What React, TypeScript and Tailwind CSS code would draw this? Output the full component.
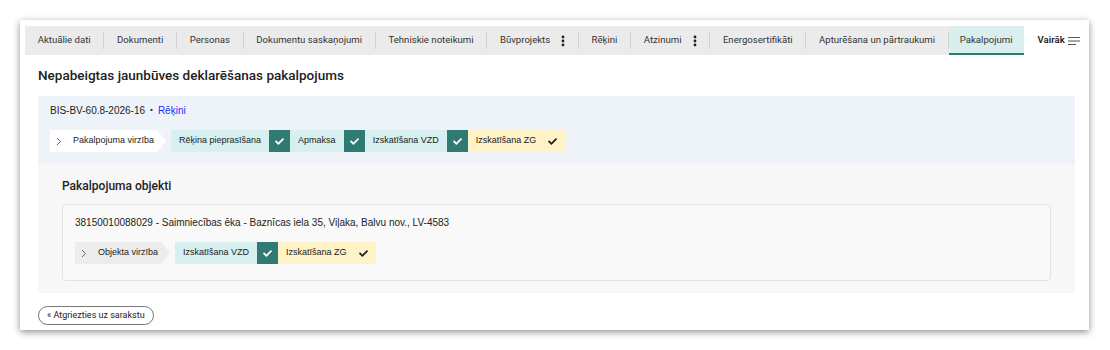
import { FaCheck } from "react-icons/fa";

const tabs = [
  { label: "Aktuālie dati" },
  { label: "Dokumenti" },
  { label: "Personas" },
  { label: "Dokumentu saskaņojumi" },
  { label: "Tehniskie noteikumi" },
  { label: "Būvprojekts", menu: true },
  { label: "Rēķini" },
  { label: "Atzinumi", menu: true },
  { label: "Energosertifikāti" },
  { label: "Apturēšana un pārtraukumi" },
];

type Step = { label: string; done?: boolean; current?: boolean };

const serviceSteps: Step[] = [
  { label: "Rēķina pieprasīšana", done: true },
  { label: "Apmaksa", done: true },
  { label: "Izskatīšana VZD", done: true },
  { label: "Izskatīšana ZG", current: true },
];

const objectSteps: Step[] = [
  { label: "Izskatīšana VZD", done: true },
  { label: "Izskatīšana ZG", current: true },
];

const Kebab = () => (
  <svg width="4" height="12" viewBox="0 0 4 12" className="ml-[11px] shrink-0">
    <circle cx="2" cy="2" r="1.4" fill="#222" />
    <circle cx="2" cy="6" r="1.4" fill="#222" />
    <circle cx="2" cy="10" r="1.4" fill="#222" />
  </svg>
);

const Lines = () => (
  <svg width="12" height="10" viewBox="0 0 12 10" className="ml-[3px] shrink-0">
    <path d="M0 1.5H12M0 5H12M0 8.5H8" stroke="#555" strokeWidth="1.1" />
  </svg>
);

const Flow = ({ title, steps, tone }: { title: string; steps: Step[]; tone: "white" | "gray" }) => (
  <div className="flex items-stretch h-[22px] font-['Liberation_Sans',Arial,sans-serif] text-[9px] text-[#222] whitespace-nowrap">
    <div
      className={`flex items-center pl-[6px] pr-[12px] [clip-path:polygon(0_0,calc(100%-9px)_0,100%_50%,calc(100%-9px)_100%,0_100%)] ${
        tone === "white" ? "bg-white" : "bg-[#ececec]"
      }`}
    >
      <svg width="6" height="9" viewBox="0 0 6 9" className="mr-[11px]">
        <path d="M1 1l3.5 3.5L1 8" fill="none" stroke="#666" strokeWidth="1" />
      </svg>
      {title}
    </div>
    <div className="flex ml-[5px]">
      {steps.map((s) =>
        s.current ? (
          <div key={s.label} className="flex items-center bg-[#fdf3c6] pl-[8px] pr-[8px]">
            {s.label}
            <FaCheck className="ml-[12px] text-[#222]" size={9} />
          </div>
        ) : (
          <div key={s.label} className="flex">
            <div className="flex items-center bg-[#d7efef] px-[8px]">{s.label}</div>
            <div className="flex items-center justify-center w-[21px] bg-[#2f7a73]">
              <FaCheck className="text-white" size={9} />
            </div>
          </div>
        )
      )}
    </div>
  </div>
);

export default function App() {
  return (
    <div className="w-[1110px] h-[350px] bg-white pt-[20px] pl-[20px]">
      <div className="w-[1069px] h-[310px] bg-white pt-[6px] pl-[5px] pr-[6px] shadow-[0_2px_7px_rgba(0,0,0,0.45)]">
        {/* Tabs */}
        <div className="flex items-center h-[29px] bg-[#ebebeb] font-['Roboto',sans-serif] text-[9.6px] text-[#333] whitespace-nowrap overflow-hidden">
          {tabs.map((t, i) => (
            <div key={t.label} className="flex items-center h-full shrink-0">
              {i > 0 && <span className="w-px h-[17px] bg-[#d2d2d2]" />}
              <div className="flex items-center h-full px-[12.7px]">
                {t.label}
                {t.menu && <Kebab />}
              </div>
            </div>
          ))}
          <span className="w-px h-[17px] bg-[#d2d2d2] shrink-0" />
          <div className="flex items-center h-full px-[11px] bg-[#d8efee] border-b-2 border-[#2f7a73] pt-[2px] shrink-0">
            Pakalpojumi
          </div>
          <div className="flex flex-1 items-center h-full pl-[14px] bg-white font-semibold text-[#222]">
            Vairāk
            <Lines />
          </div>
        </div>

        <div className="pl-[13px] pr-[8px]">
          <h1 className="h-[41px] flex items-center font-['Roboto',sans-serif] text-[13.5px] font-medium text-[#222]">
            Nepabeigtas jaunbūves deklarēšanas pakalpojums
          </h1>

          {/* Service */}
          <div className="bg-[#eef3fa] pl-[12px] pt-[8px] pb-[12px]">
            <div className="h-[12px] flex items-center font-['Liberation_Sans',Arial,sans-serif] text-[10px] text-[#222]">
              BIS-BV-60.8-2026-16
              <span className="mx-[5px] text-[8px]">•</span>
              <span className="text-[#1f2ef2]">Rēķini</span>
            </div>
            <div className="mt-[14px]">
              <Flow title="Pakalpojuma virzība" steps={serviceSteps} tone="white" />
            </div>
          </div>

          {/* Objects */}
          <div className="bg-[#f7f7f7] px-[24px] pt-[16px] pb-[12px]">
            <h2 className="h-[12px] flex items-center font-['Roboto',sans-serif] text-[12px] font-medium text-[#222]">
              Pakalpojuma objekti
            </h2>
            <div className="mt-[12px] border border-[#e2e2e2] rounded-[4px] bg-[#f9f9f9] px-[12px] pt-[11px] pb-[16px]">
              <div className="h-[12px] flex items-center font-['Liberation_Sans',Arial,sans-serif] text-[10px] text-[#222]">
                38150010088029 - Saimniecības ēka - Baznīcas iela 35, Viļaka, Balvu nov., LV-4583
              </div>
              <div className="mt-[14px]">
                <Flow title="Objekta virzība" steps={objectSteps} tone="gray" />
              </div>
            </div>
          </div>

          <button className="mt-[13px] h-[19px] px-[8px] rounded-full border border-[#777] font-['Roboto',sans-serif] text-[9px] text-[#222]">
            « Atgriezties uz sarakstu
          </button>
        </div>
      </div>
    </div>
  );
}
